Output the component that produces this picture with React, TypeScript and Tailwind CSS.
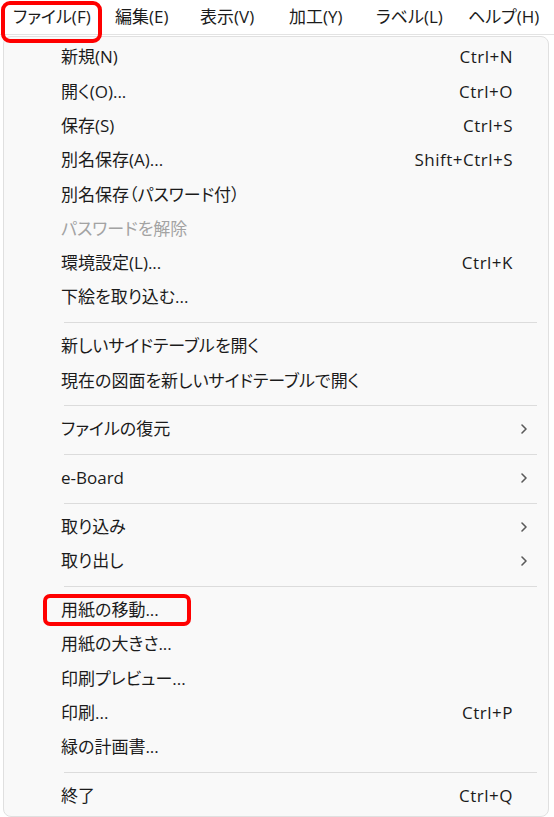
import React from "react";

type Item =
  | { kind: "sep" }
  | { kind: "item"; label: string; shortcut?: string; sub?: boolean; disabled?: boolean; mark?: boolean };

const menus = [
  { label: "ファイル(F)", w: "w-[102px]" },
  { label: "編集(E)", w: "w-[85px]" },
  { label: "表示(V)", w: "w-[89px]" },
  { label: "加工(Y)", w: "w-[87px]" },
  { label: "ラベル(L)", w: "w-[92px]" },
  { label: "ヘルプ(H)", w: "w-[80px]" },
];

const items: Item[] = [
  { kind: "item", label: "新規(N)", shortcut: "Ctrl+N" },
  { kind: "item", label: "開く(O)...", shortcut: "Ctrl+O" },
  { kind: "item", label: "保存(S)", shortcut: "Ctrl+S" },
  { kind: "item", label: "別名保存(A)...", shortcut: "Shift+Ctrl+S" },
  { kind: "item", label: "別名保存（パスワード付）" },
  { kind: "item", label: "パスワードを解除", disabled: true },
  { kind: "item", label: "環境設定(L)...", shortcut: "Ctrl+K" },
  { kind: "item", label: "下絵を取り込む..." },
  { kind: "sep" },
  { kind: "item", label: "新しいサイドテーブルを開く" },
  { kind: "item", label: "現在の図面を新しいサイドテーブルで開く" },
  { kind: "sep" },
  { kind: "item", label: "ファイルの復元", sub: true },
  { kind: "sep" },
  { kind: "item", label: "e-Board", sub: true },
  { kind: "sep" },
  { kind: "item", label: "取り込み", sub: true },
  { kind: "item", label: "取り出し", sub: true },
  { kind: "sep" },
  { kind: "item", label: "用紙の移動...", mark: true },
  { kind: "item", label: "用紙の大きさ..." },
  { kind: "item", label: "印刷プレビュー..." },
  { kind: "item", label: "印刷...", shortcut: "Ctrl+P" },
  { kind: "item", label: "緑の計画書..." },
  { kind: "sep" },
  { kind: "item", label: "終了", shortcut: "Ctrl+Q" },
];

function Chevron() {
  return (
    <svg width="8" height="12" viewBox="0 0 8 12" className="text-[#5a5a5a]">
      <path d="M2 2 L6 6 L2 10" fill="none" stroke="currentColor" strokeWidth="1.6" strokeLinecap="round" strokeLinejoin="round" />
    </svg>
  );
}

export default function App() {
  return (
    <div className="relative w-[554px] h-[817px] overflow-hidden bg-white text-[17px] text-[#1b1b1b] font-['Open_Sans','Noto_Sans_CJK_JP',sans-serif] [font-feature-settings:'palt']">
      {/* menu bar */}
      <div className="flex h-[35px] items-center border-b border-[#e3e3e3] pl-[13px]">
        {menus.map((m) => (
          <div key={m.label} className={`${m.w} shrink-0 whitespace-nowrap`}>
            {m.label}
          </div>
        ))}
      </div>
      <div className="absolute left-[1px] top-[1px] h-[42px] w-[101px] rounded-[9px] border-[4px] border-[#ff0000]" />

      {/* dropdown */}
      <div className="ml-[3px] mr-[5px] mt-[1px] rounded-[8px] border border-[#e0e0e0] bg-[#f9f9f9] pt-[3px] pb-[3px]">
        {items.map((it, i) =>
          it.kind === "sep" ? (
            <div key={i} className="pt-[7.5px] pb-[6px] pl-[60px] pr-[11px]">
              <div className="h-px bg-[#dcdcdc]" />
            </div>
          ) : (
            <div key={i} className="relative flex h-[34.3px] items-center pl-[57px] pr-[35px]">
              <span className={`flex-1 whitespace-nowrap ${it.disabled ? "text-[#a3a3a3]" : ""}`}>{it.label}</span>
              {it.shortcut && <span className="whitespace-nowrap tracking-[0.5px]">{it.shortcut}</span>}
              {it.sub && (
                <span className="absolute right-[20px] top-1/2 -translate-y-1/2 flex">
                  <Chevron />
                </span>
              )}
              {it.mark && (
                <div className="absolute left-[39px] top-[1px] h-[32px] w-[148px] rounded-[7px] border-[4px] border-[#ff0000]" />
              )}
            </div>
          )
        )}
      </div>
    </div>
  );
}
